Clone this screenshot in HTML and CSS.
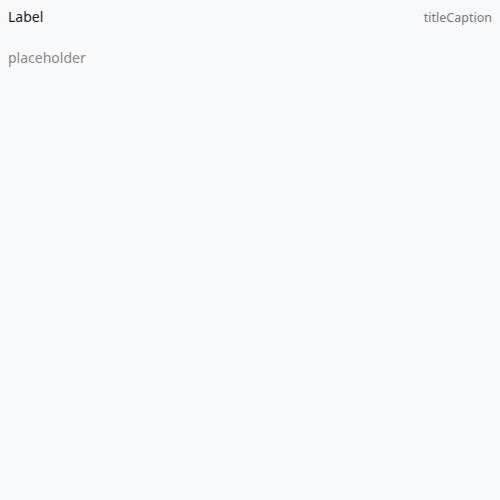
FILE: index.html
```html
<!DOCTYPE html>
<html>
<head>
<meta charset="utf-8">
<link rel="stylesheet" href="styles.css">
</head>
<body>
<div class="field">
  <div class="header">
    <span class="label">Label</span>
    <span class="caption">titleCaption</span>
  </div>
  <div class="placeholder">placeholder</div>
</div>
</body>
</html>
```
FILE: styles.css
```css
html, body {
  margin: 0;
  padding: 0;
  background: #f8f9fb;
  font-family: "Noto Sans", sans-serif;
}
.field {
  padding: 7px 8px;
}
.header {
  display: flex;
  justify-content: space-between;
  align-items: baseline;
}
.label {
  font-size: 14px;
  color: #222;
}
.caption {
  font-size: 12.5px;
  color: #777;
}
.placeholder {
  margin-top: 22px;
  font-size: 14px;
  color: #888;
}
```
